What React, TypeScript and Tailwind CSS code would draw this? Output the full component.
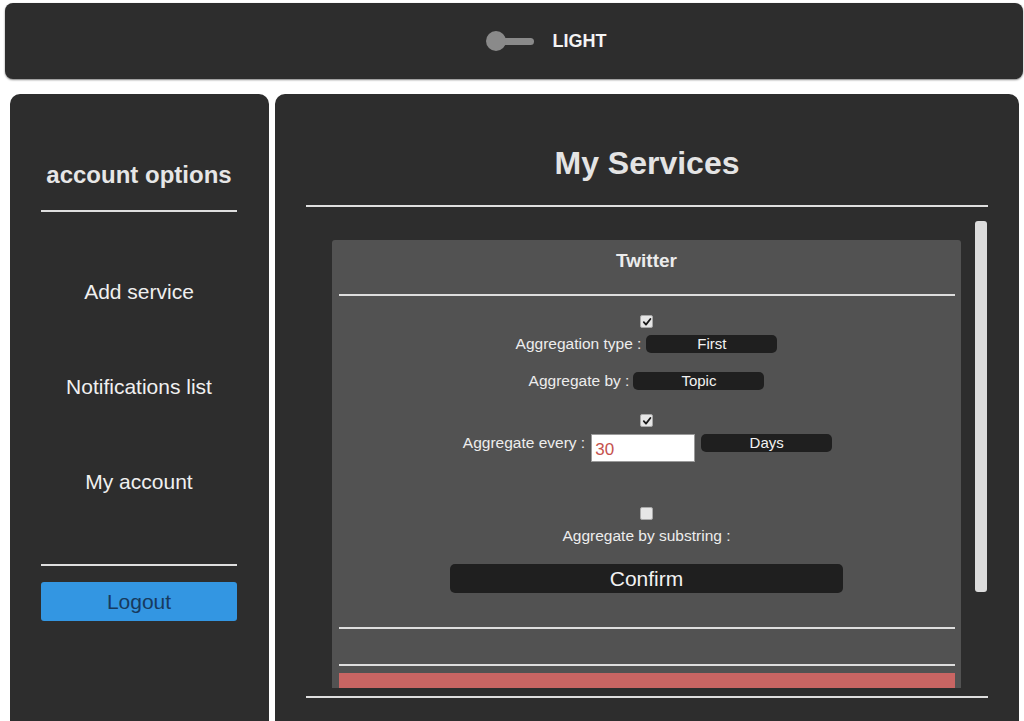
import React from 'react'

// petite case à cocher dessinée (le rendu natif de Chrome est bleu)
function Box({ checked }: { checked?: boolean }) {
  return (
    <div className="w-[13px] h-[13px] rounded-[2px] bg-[#e6e6e6] border border-[#a9a9a9] flex items-center justify-center">
      {checked && (
        <svg width="10" height="10" viewBox="0 0 10 10">
          <path d="M1.8 5.2 L4 7.6 L8.4 2" stroke="#1a1a1a" strokeWidth="1.8" fill="none" strokeLinecap="round" strokeLinejoin="round" />
        </svg>
      )}
    </div>
  )
}

function Pill({ label, w = 'w-[131px]' }: { label: string; w?: string }) {
  return (
    <div className={`${w} h-[18px] rounded-[5px] bg-[#1f1f1f] text-[#f2f2f2] text-[15px] leading-[18px] text-center`}>
      {label}
    </div>
  )
}

const Rule = ({ className = '' }: { className?: string }) => (
  <div className={`h-[2px] bg-[#dedede] ${className}`} />
)

export default function App() {
  return (
    <div className="min-h-screen bg-white font-['Liberation_Sans',Arial,sans-serif] pt-[3px] pb-4">
      {/* barre du thème */}
      <header className="ml-[5px] mr-[1px] h-[76px] rounded-[8px] bg-[#2d2d2d] shadow-[0_1px_2px_rgba(0,0,0,0.5)] flex items-center justify-center pl-[64px]">
        <div className="relative w-[48px] h-[20px] flex items-center">
          <div className="absolute left-[12px] right-0 h-[7px] rounded-full bg-[#8a8a8a]" />
          <div className="absolute left-0 w-[20px] h-[20px] rounded-full bg-[#8a8a8a]" />
        </div>
        <span className="ml-[19px] text-[18px] font-bold text-[#f4f4f4] leading-none">LIGHT</span>
      </header>

      <div className="mt-[15px] flex gap-[6px] pl-[10px] pr-[5px]">
        {/* menu du compte */}
        <aside className="w-[259px] h-[660px] shrink-0 rounded-[10px] bg-[#2d2d2d] pt-[67px] px-[31px] pr-[32px] flex flex-col text-center">
          <h2 className="text-[24px] leading-[28px] font-bold text-[#e6e6e6]">account options</h2>
          <Rule className="mt-[21px]" />
          <div className="mt-[68px] flex flex-col gap-[71px] text-[21px] leading-[24px] text-[#f0f0f0]">
            <a>Add service</a>
            <a>Notifications list</a>
            <a>My account</a>
          </div>
          <Rule className="mt-[70px]" />
          <button className="mt-[16px] h-[39px] rounded-[3px] bg-[#3396e2] text-[21px] text-[#173a5e]">Logout</button>
        </aside>

        {/* services */}
        <main className="flex-1 h-[660px] rounded-[10px] bg-[#2d2d2d] pt-[50px] px-[31px] flex flex-col">
          <h1 className="text-[32px] leading-[38px] font-bold text-[#e4e4e4] text-center">My Services</h1>
          <Rule className="mt-[23px]" />

          <div className="relative mt-[13px] h-[468px] overflow-hidden">
            {/* barre de défilement */}
            <div className="absolute right-[1px] top-[1px] w-[12px] h-[371px] rounded-[3px] bg-[#dcdcdc]" />
            <div className="pt-[20px] pl-[26px] pr-[27px]">
              <section className="h-[570px] rounded-[3px] bg-[#525252] pt-[9px] flex flex-col items-center">
                <h3 className="text-[19px] leading-[24px] font-bold text-[#ececec]">Twitter</h3>
                <Rule className="mt-[21px] self-stretch ml-[7px] mr-[6px]" />

                <div className="mt-[19px]"><Box checked /></div>
                <div className="mt-[7px] flex items-center gap-[5px] text-[15.5px] leading-[18px] text-[#ededed]">
                  <span>Aggregation type :</span>
                  <Pill label="First" />
                </div>
                <div className="mt-[19px] flex items-center gap-[4px] text-[15.5px] leading-[18px] text-[#ededed]">
                  <span>Aggregate by :</span>
                  <Pill label="Topic" />
                </div>

                <div className="mt-[24px]"><Box checked /></div>
                <div className="mt-[7px] flex items-start gap-[6px] text-[15.5px] leading-[18px] text-[#ededed] pl-[2px]">
                  <span className="pt-[0px]">Aggregate every :</span>
                  <input
                    readOnly
                    value="30"
                    className="w-[104px] h-[28px] bg-white border border-[#9a9a9a] px-[3px] pt-[3px] text-[17px] text-[#c5524d] outline-none"
                  />
                  <Pill label="Days" />
                </div>

                <div className="mt-[45px]"><Box /></div>
                <div className="mt-[7px] text-[15.5px] leading-[18px] text-[#ededed]">Aggregate by substring :</div>
                <button className="mt-[19px] w-[393px] h-[29px] rounded-[5px] bg-[#1f1f1f] text-[21px] text-[#f2f2f2] leading-[29px]">Confirm</button>

                <Rule className="mt-[34px] self-stretch ml-[7px] mr-[6px]" />
                <Rule className="mt-[35px] self-stretch ml-[7px] mr-[6px]" />
                <div className="mt-[7px] self-stretch ml-[7px] mr-[6px] h-[40px] bg-[#c96563]" />
              </section>
            </div>
          </div>

          <Rule className="mt-[8px]" />
        </main>
      </div>
    </div>
  )
}
